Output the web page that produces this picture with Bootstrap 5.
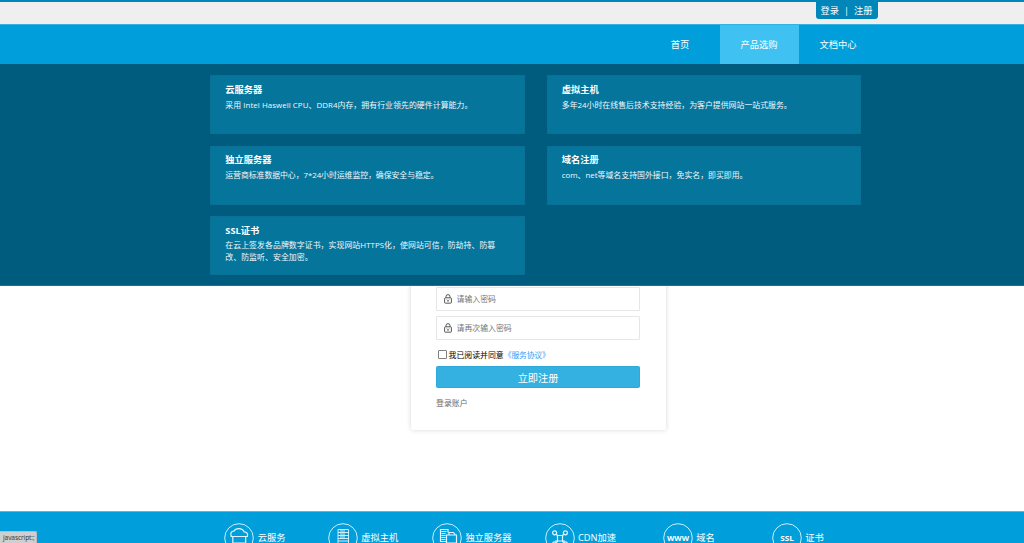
<!DOCTYPE html>
<html lang="zh-CN">
<head>
<meta charset="utf-8">
<meta name="viewport" content="width=device-width, initial-scale=1">
<title>注册账户</title>
<link href="https://cdn.jsdelivr.net/npm/bootstrap@5.3.0/dist/css/bootstrap.min.css" rel="stylesheet">
<style>
body{font-family:"Open Sans","Noto Sans CJK SC",sans-serif;font-size:7.9px;line-height:11.8px;color:#222;background:#fff;height:543px}
a{color:inherit;text-decoration:none}
.topbar{height:24px;border-top:2px solid #0086b9;background:#efefef}
.login-tab{width:62px;height:16.5px;margin-right:146px;background:#0086b9;color:#fff;font-size:9.2px;border-radius:0 0 3px 3px;gap:5px;padding-top:1px;padding-right:1px}
.mainnav{height:40px;background:#009fdb;border-top:1px solid #35b2e2;padding-right:146.5px;font-size:9.25px;color:#fff}
.mainnav a{width:79px}
.mainnav a.active{background:#3fc1f1}
.mega{top:100%;height:222px;background:#005c7e;border-bottom:1px solid #1f6f91;padding:11.3px 163px 0 210.3px;z-index:5}
.mega-grid{display:grid;grid-template-columns:314.3px 314.3px;gap:11.4px 22.2px;grid-auto-rows:59px}
.product{background:#06759b;border:1px solid #0a7096;padding:6.6px 18px 0 14px;color:#f0f8fb}
.product h3{font-size:9.25px;line-height:14px;font-weight:700;margin:0 0 2.7px;color:#fff}
.product p{margin:0;line-height:11.7px}
.product .wide{letter-spacing:.05px}
.product .tight{letter-spacing:-.07px}
.page-main{height:447px}
.signup{width:254.5px;height:210px;margin-left:411px;margin-top:156px;padding:67px 25.4px 0 25px;box-shadow:0 0 5px rgba(0,0,0,.16);border-radius:2px}
.field{height:24px;border:1px solid #e6e6e6;border-radius:1px;margin-bottom:5.4px;padding-left:6.5px;gap:5px;color:#757575}
.field svg{width:8px;height:10px;flex:none}
.field input{border:0;outline:0;padding:0;width:170px;font-size:7.9px;line-height:14px;background:transparent;color:#444}
.field input::placeholder{color:#757575;opacity:1}
.agree{height:12px;margin-top:9.6px;margin-left:2px}
.agree input{appearance:none;width:9px;height:9px;border:1px solid #808080;border-radius:1px;margin:0 1.5px 2px 0;background:#fff}
.agree a{color:#3a9cf5;letter-spacing:-.25px}
.btn-reg{display:block;width:100%;height:22px;padding:0;background:#34b1e1;border:1px solid #2fa9d9;border-radius:1.5px;color:#fff;font-size:10.2px;line-height:22px;margin-top:3.9px}
.signin{display:inline-block;margin-top:10.6px;color:#666b70}
.sitefoot{height:32px;background:#009fdb;border-top:1px solid #4fbde6;color:#fff;padding-left:223.5px;padding-top:11.3px;font-size:9.25px}
.services{display:grid;grid-template-columns:104.3px 104.2px 112.6px 118.4px 109px 100px}
.services svg{width:30px;height:30px;flex:none;fill:none;stroke:#e3f5fc;stroke-width:.9}
.services svg text{fill:#fff;stroke:none;font-weight:700;text-anchor:middle}
.services a{gap:3.4px;height:30px;white-space:nowrap}
.services a:first-child{gap:4.3px}
.status{left:0;bottom:0;width:37px;height:12px;background:#cfcfcf;border:1px solid #bbb;border-left:0;border-bottom:0;border-radius:0 2px 0 0;color:#333;font-size:6.6px;line-height:11px;padding-left:3px;white-space:nowrap;letter-spacing:-.1px}
</style>
</head>
<body class="overflow-hidden position-relative">
<header class="position-relative">
  <div class="topbar d-flex justify-content-end align-items-start">
    <div class="login-tab d-flex justify-content-center align-items-center"><a href="#">登录</a><span>|</span><a href="#">注册</a></div>
  </div>
  <nav class="mainnav d-flex justify-content-end">
    <a href="#" class="d-flex align-items-center justify-content-center">首页</a>
    <a href="#" class="active d-flex align-items-center justify-content-center">产品选购</a>
    <a href="#" class="d-flex align-items-center justify-content-center">文档中心</a>
  </nav>
  <div class="mega position-absolute start-0 w-100">
    <div class="mega-grid">
      <a class="product" href="#"><h3>云服务器</h3><p class="wide">采用 Intel Haswell CPU、DDR4内存，拥有行业领先的硬件计算能力。</p></a>
      <a class="product" href="#"><h3>虚拟主机</h3><p>多年24小时在线售后技术支持经验，为客户提供网站一站式服务。</p></a>
      <a class="product" href="#"><h3>独立服务器</h3><p class="tight">运营商标准数据中心，7*24小时运维监控，确保安全与稳定。</p></a>
      <a class="product" href="#"><h3>域名注册</h3><p>com、net等域名支持国外接口，免实名，即买即用。</p></a>
      <a class="product" href="#"><h3>SSL证书</h3><p class="wide">在云上签发各品牌数字证书，实现网站HTTPS化，使网站可信，防劫持、防篡<br>改、防监听、安全加密。</p></a>
    </div>
  </div>
</header>
<main class="page-main d-flex align-items-start">
  <form class="signup">
    <div class="field d-flex align-items-center">
      <svg viewBox="0 0 8 10" fill="none" stroke="#444" stroke-width=".9"><rect x=".6" y="3.8" width="6.8" height="5.4" rx=".8"/><path d="M2 3.8V2.6a2 2 0 0 1 4 0v1.2M3 5.6l1 1 1-1M4 6.6v1.3"/></svg>
      <input type="password" placeholder="请输入密码" aria-label="密码">
    </div>
    <div class="field d-flex align-items-center">
      <svg viewBox="0 0 8 10" fill="none" stroke="#444" stroke-width=".9"><rect x=".6" y="3.8" width="6.8" height="5.4" rx=".8"/><path d="M2 3.8V2.6a2 2 0 0 1 4 0v1.2M3 5.6l1 1 1-1M4 6.6v1.3"/></svg>
      <input type="password" placeholder="请再次输入密码" aria-label="确认密码">
    </div>
    <div class="agree d-flex align-items-center"><input type="checkbox" aria-label="同意"><span class="text-black">我已阅读并同意</span><a href="#">《服务协议》</a></div>
    <button type="button" class="btn btn-reg">立即注册</button>
    <a class="signin" href="#">登录账户</a>
  </form>
</main>
<footer class="sitefoot">
  <div class="services">
    <a href="#" class="d-flex align-items-center"><svg viewBox="0 0 30 30"><circle cx="15" cy="15" r="14.3"/><path stroke-width="1.2" d="M7.5 13.2c-1.600-2.500-.3-4.900 2.400-5 1.500-3.400 8.500-3.700 10.200.6 3 .1 4.300 2.400 2.900 4.700M6.500 13.500h17.500M8.800 13.500v6.500h12.900v-6.500"/></svg>云服务</a>
    <a href="#" class="d-flex align-items-center"><svg viewBox="0 0 30 30"><circle cx="15" cy="15" r="14.3"/><path d="M10 6.500h10.500v11.500H10zM10 9.500h10.500M10 12.500h10.500M10 15.500h10.500M12 8h5M12 11h5M12 14h5M10 18v4M20.500 18v4"/></svg>虚拟主机</a>
    <a href="#" class="d-flex align-items-center"><svg viewBox="0 0 30 30"><circle cx="15" cy="15" r="14.3"/><path stroke-width="1.2" d="M14 18.500H8.500V6.500h7.500v3M9.500 8.500h5M9.500 10.500h4M9.500 12.500h4M9.500 14.500h4M9.500 16.500h4M14.500 20v-8h10v8zM17 12v-2.500h4.500l2 2.500"/></svg>独立服务器</a>
    <a href="#" class="d-flex align-items-center"><svg viewBox="0 0 30 30"><circle cx="15" cy="15" r="14.3"/><g stroke-width="1.2"><circle cx="9.600" cy="9.800" r="2"/><circle cx="20.400" cy="9.800" r="2"/><circle cx="9.600" cy="20.800" r="2"/><circle cx="20.400" cy="20.800" r="2"/><path d="M11.300 11l1.200 1.500v6l-1.200 1M18.700 11l-1.200 1.500v6l1.200 1M11.500 12.500h7M10 18h10"/></g></svg>CDN加速</a>
    <a href="#" class="d-flex align-items-center"><svg viewBox="0 0 30 30"><circle cx="15" cy="15" r="14.3"/><text x="15" y="17.5" font-size="7.5" textLength="22" lengthAdjust="spacingAndGlyphs">WWW</text></svg>域名</a>
    <a href="#" class="d-flex align-items-center"><svg viewBox="0 0 30 30"><circle cx="15" cy="15" r="14.3"/><text x="15" y="17.5" font-size="7.3" textLength="13.5" lengthAdjust="spacingAndGlyphs">SSL</text></svg>证书</a>
  </div>
</footer>
<div class="status position-absolute">javascript:;</div>
<script src="https://cdn.jsdelivr.net/npm/bootstrap@5.3.0/dist/js/bootstrap.bundle.min.js"></script>
</body>
</html>
